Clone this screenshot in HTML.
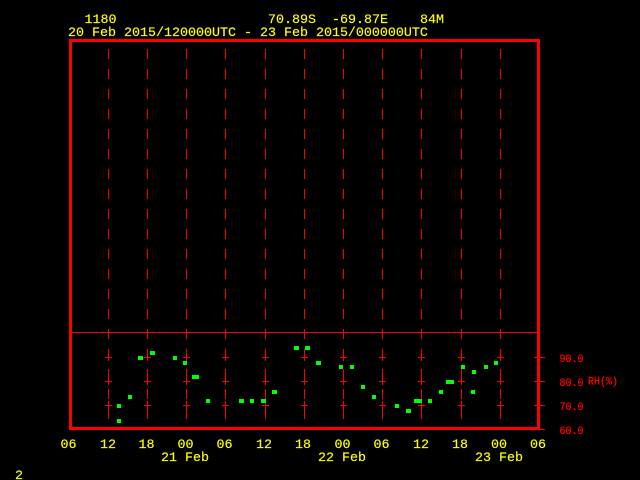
<!DOCTYPE html>
<html>
<head>
<meta charset="utf-8">
<style>
html,body{margin:0;padding:0;background:#000;width:640px;height:480px;overflow:hidden}
svg{display:block}
.y{font-family:"Liberation Mono",monospace;font-size:13.33px;fill:#ffff00;stroke:#ffff00;stroke-width:.15px}
.r{font-family:"Liberation Mono",monospace;font-size:11px;fill:#ff0000;stroke:#ff0000;stroke-width:.25px}
</style>
</head>
<body>
<svg width="640" height="480" viewBox="0 0 640 480" xmlns="http://www.w3.org/2000/svg">
<defs>
<g id="g" shape-rendering="crispEdges">
<path fill="none" stroke="#f00" stroke-width="1" d="M.5 49V59M.5 69V79M.5 89V99M.5 109V119M.5 129V139M.5 149V159M.5 169V179M.5 189V199M.5 209V219M.5 229V239M.5 249V259M.5 269V279M.5 289V299M.5 309V319M.5 329V339M.5 349V361M.5 369V385M.5 389V399M.5 401V419M-3 357.5H4M-3 381.5H4M-3 405.5H4"/>
</g>
</defs>
<rect width="640" height="480" fill="#000"/>
<use href="#g" x="108"/><use href="#g" x="147"/><use href="#g" x="186"/><use href="#g" x="225"/><use href="#g" x="265"/><use href="#g" x="304"/><use href="#g" x="343"/><use href="#g" x="382"/><use href="#g" x="421"/><use href="#g" x="461"/><use href="#g" x="500"/>
<g shape-rendering="crispEdges" fill="#f00">
<rect x="69" y="39" width="471" height="3"/>
<rect x="69" y="427" width="471" height="3"/>
<rect x="69" y="39" width="3" height="391"/>
<rect x="537" y="39" width="3" height="391"/>
<rect x="70" y="332" width="468" height="1"/>
<rect x="534" y="357" width="11" height="1"/>
<rect x="534" y="381" width="11" height="1"/>
<rect x="534" y="405" width="11" height="1"/>
<rect x="534" y="429" width="11" height="1"/>
</g>
<g shape-rendering="crispEdges" fill="#0f0">
<rect x="138" y="356" width="5" height="4"/>
<rect x="150" y="351" width="5" height="4"/>
<rect x="173" y="356" width="4" height="4"/>
<rect x="183" y="361" width="4" height="4"/>
<rect x="192" y="375" width="7" height="4"/>
<rect x="128" y="395" width="4" height="4"/>
<rect x="117" y="404" width="4" height="4"/>
<rect x="117" y="419" width="4" height="4"/>
<rect x="206" y="399" width="4" height="4"/>
<rect x="294" y="346" width="5" height="4"/>
<rect x="305" y="346" width="5" height="4"/>
<rect x="316" y="361" width="5" height="4"/>
<rect x="339" y="365" width="4" height="4"/>
<rect x="350" y="365" width="4" height="4"/>
<rect x="361" y="385" width="4" height="4"/>
<rect x="372" y="395" width="4" height="4"/>
<rect x="239" y="399" width="5" height="4"/>
<rect x="250" y="399" width="4" height="4"/>
<rect x="261" y="399" width="5" height="4"/>
<rect x="272" y="390" width="5" height="4"/>
<rect x="395" y="404" width="4" height="4"/>
<rect x="406" y="409" width="5" height="4"/>
<rect x="414" y="399" width="8" height="4"/>
<rect x="428" y="399" width="4" height="4"/>
<rect x="439" y="390" width="4" height="4"/>
<rect x="446" y="380" width="8" height="4"/>
<rect x="461" y="365" width="4" height="4"/>
<rect x="471" y="390" width="4" height="4"/>
<rect x="472" y="370" width="4" height="4"/>
<rect x="484" y="365" width="4" height="4"/>
<rect x="494" y="361" width="4" height="4"/>
</g>
<text class="y" x="84.5" y="23">1180</text>
<text class="y" x="268" y="23">70.89S</text>
<text class="y" x="332" y="23">-69.87E</text>
<text class="y" x="420" y="23">84M</text>
<text class="y" x="68" y="36" xml:space="preserve">20 Feb 2015/120000UTC - 23 Feb 2015/000000UTC</text>
<text class="r" x="559.5" y="362" textLength="24" lengthAdjust="spacingAndGlyphs">90.0</text>
<text class="r" x="559.5" y="386" textLength="24" lengthAdjust="spacingAndGlyphs">80.0</text>
<text class="r" x="559.5" y="410" textLength="24" lengthAdjust="spacingAndGlyphs">70.0</text>
<text class="r" x="559.5" y="434" textLength="24" lengthAdjust="spacingAndGlyphs">60.0</text>
<text class="r" x="588" y="384.5" textLength="30" lengthAdjust="spacingAndGlyphs">RH(%)</text>
<text class="y" x="60.5" y="448">06</text>
<text class="y" x="100" y="448">12</text>
<text class="y" x="138.5" y="448">18</text>
<text class="y" x="177.5" y="448">00</text>
<text class="y" x="216.5" y="448">06</text>
<text class="y" x="256" y="448">12</text>
<text class="y" x="295" y="448">18</text>
<text class="y" x="334.5" y="448">00</text>
<text class="y" x="373.5" y="448">06</text>
<text class="y" x="413" y="448">12</text>
<text class="y" x="452" y="448">18</text>
<text class="y" x="491" y="448">00</text>
<text class="y" x="530" y="448">06</text>
<text class="y" x="161" y="461">21 Feb</text>
<text class="y" x="318" y="461">22 Feb</text>
<text class="y" x="475" y="461">23 Feb</text>
<text class="y" x="15" y="479">2</text>
</svg>
</body>
</html>
